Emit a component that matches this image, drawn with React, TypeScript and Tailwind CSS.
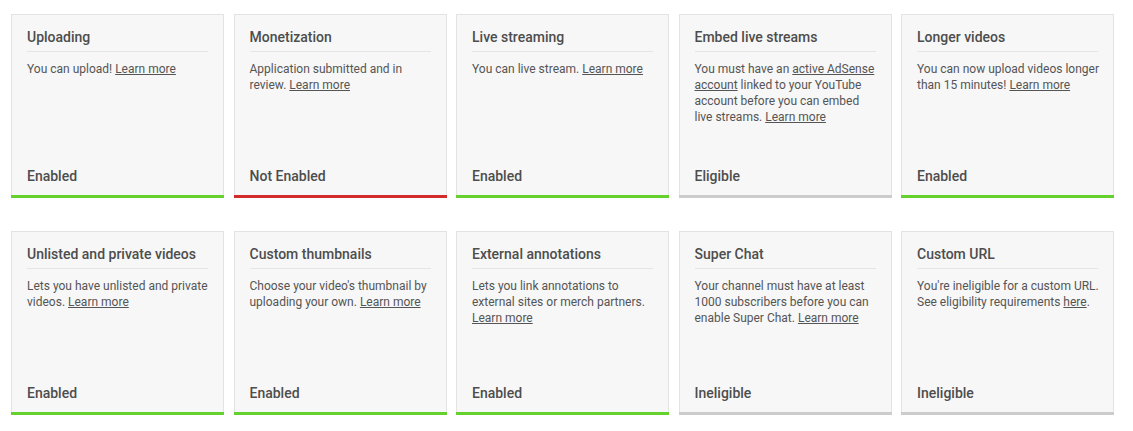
import React from "react";

type Card = {
  title: string;
  body: React.ReactNode;
  status: string;
  bar: "green" | "red" | "gray";
};

const L = ({ children }: { children: React.ReactNode }) => (
  <a className="underline text-[#555]">{children}</a>
);

const cards: Card[] = [
  { title: "Uploading", body: <>You can upload! <L>Learn more</L></>, status: "Enabled", bar: "green" },
  { title: "Monetization", body: <>Application submitted and in review. <L>Learn more</L></>, status: "Not Enabled", bar: "red" },
  { title: "Live streaming", body: <>You can live stream. <L>Learn more</L></>, status: "Enabled", bar: "green" },
  {
    title: "Embed live streams",
    body: <>You must have an <L>active AdSense account</L> linked to your YouTube account before you can embed live streams. <L>Learn more</L></>,
    status: "Eligible",
    bar: "gray",
  },
  { title: "Longer videos", body: <>You can now upload videos longer than 15 minutes! <L>Learn more</L></>, status: "Enabled", bar: "green" },
  { title: "Unlisted and private videos", body: <>Lets you have unlisted and private videos. <L>Learn more</L></>, status: "Enabled", bar: "green" },
  { title: "Custom thumbnails", body: <>Choose your video's thumbnail by uploading your own. <L>Learn more</L></>, status: "Enabled", bar: "green" },
  { title: "External annotations", body: <>Lets you link annotations to external sites or merch partners. <L>Learn more</L></>, status: "Enabled", bar: "green" },
  { title: "Super Chat", body: <>Your channel must have at least 1000 subscribers before you can enable Super Chat. <L>Learn more</L></>, status: "Ineligible", bar: "gray" },
  { title: "Custom URL", body: <>You're ineligible for a custom URL. See eligibility requirements <L>here</L>.</>, status: "Ineligible", bar: "gray" },
];

const barClass = {
  green: "bg-[#64d12c]",
  red: "bg-[#d32a2a]",
  gray: "bg-[#cccccc]",
};

export default function App() {
  return (
    <div className="w-[1133px] h-[431px] bg-white pl-[11px] pt-[14px]" style={{ fontFamily: "Roboto, 'Liberation Sans', sans-serif" }}>
      <div className="grid grid-cols-5 gap-x-[9.5px] gap-y-[33px] w-[1103px]">
        {cards.map((c, i) => (
          <div key={i} className="h-[184px] bg-[#f7f7f7] border border-b-0 border-[#e3e3e3] flex flex-col">
            <div className="flex-1 flex flex-col px-[15px] pt-[12px]">
              <div className="text-[14px] leading-[20px] font-medium text-[#4d4d4d] pb-[4px] border-b border-[#e5e5e5]">{c.title}</div>
              <div className="mt-[9px] -mr-[3px] text-[12px] leading-[16px] text-[#555]">{c.body}</div>
              <div className="mt-auto pb-[9px] text-[14px] leading-[20px] font-medium text-[#4d4d4d]">{c.status}</div>
            </div>
            <div className={`h-[3px] -mx-px ${barClass[c.bar]}`} />
          </div>
        ))}
      </div>
    </div>
  );
}
